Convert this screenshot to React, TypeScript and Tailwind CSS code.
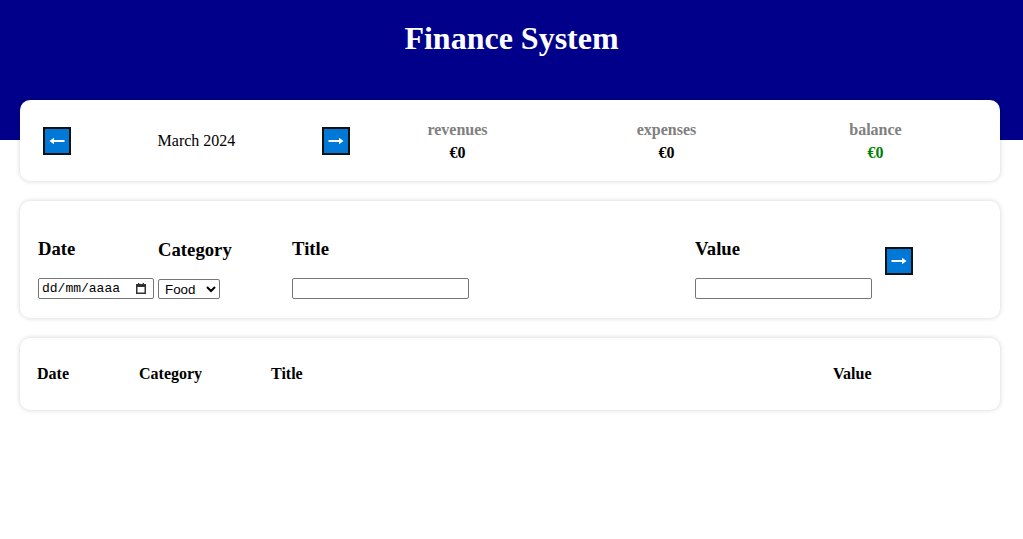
import React from "react";

const Arrow = ({ dir }: { dir: "left" | "right" }) => (
  <svg width="16" height="10" viewBox="0 0 16 10" className={dir === "left" ? "rotate-180" : ""}>
    <line x1="0.5" y1="5" x2="12" y2="5" stroke="white" strokeWidth="2" />
    <path d="M11 1.8 L15.5 5 L11 8.2 Z" fill="white" />
  </svg>
);

const NavButton = ({ dir }: { dir: "left" | "right" }) => (
  <button className="w-[28px] h-[28px] bg-[#0078d7] border-2 border-[#111] flex items-center justify-center shrink-0">
    <Arrow dir={dir} />
  </button>
);

const Stat = ({ label, value, green }: { label: string; value: string; green?: boolean }) => (
  <div className="flex flex-col items-center font-bold text-[16px] leading-[23px]">
    <span className="text-[#808080]">{label}</span>
    <span className={green ? "text-[#008000]" : "text-black"}>{value}</span>
  </div>
);

const Label = ({ children }: { children: React.ReactNode }) => (
  <h3 className="font-bold text-[18.72px] leading-[22px] mb-[18px]">{children}</h3>
);

export default function App() {
  return (
    <div className="min-h-[539px] bg-white" style={{ fontFamily: '"Liberation Serif", "Times New Roman", serif' }}>
      <header className="h-[140px] bg-[#00008b] text-white text-center pt-[20px]">
        <h1 className="text-[32px] font-bold leading-[37px]">Finance System</h1>
      </header>
      <main className="-mt-[40px] ml-5 w-[980px] flex flex-col gap-5">
        {/* Summary card */}
        <section className="bg-white rounded-[10px] shadow-[0_0_5px_rgba(0,0,0,0.18)] h-[81px] flex items-center pl-[23px] pr-[20px]">
          <div className="w-[307px] flex items-center justify-between">
            <NavButton dir="left" />
            <span className="text-[16px]">March 2024</span>
            <NavButton dir="right" />
          </div>
          <div className="flex-1 ml-[3px] grid grid-cols-3">
            <Stat label="revenues" value="€0" />
            <Stat label="expenses" value="€0" />
            <Stat label="balance" value="€0" green />
          </div>
        </section>

        {/* Input card */}
        <section className="bg-white rounded-[10px] shadow-[0_0_5px_rgba(0,0,0,0.18)] h-[117px] flex items-start pt-[37px] pl-[18px]">
          <div className="w-[120px] flex flex-col">
            <Label>Date</Label>
            <div className="w-[116px] h-[21px] border border-[#767676] rounded-[2px] flex items-center justify-between pl-[3px] pr-[7px]">
              <span className="text-[13px] text-black" style={{ fontFamily: '"Liberation Mono", monospace' }}>dd/mm/aaaa</span>
              <svg width="10" height="11" viewBox="0 0 10 11">
                <rect x="0.75" y="1.75" width="8.5" height="8.5" fill="none" stroke="#333" strokeWidth="1.5" />
                <rect x="0.5" y="1.5" width="9" height="2.5" fill="#333" />
                <rect x="2" y="0" width="1.3" height="2" fill="#333" />
                <rect x="6.7" y="0" width="1.3" height="2" fill="#333" />
              </svg>
            </div>
          </div>
          <div className="w-[134px] flex flex-col">
            <Label>
              <span className="relative top-[1px]">Category</span>
            </Label>
            <select
              className="w-[62px] h-[20px] mt-[1px] border border-[#767676] rounded-[2px] text-[13.33px] pl-[2px] text-black bg-white"
              style={{ fontFamily: '"Liberation Sans", Arial, sans-serif', appearance: "auto" }}
              defaultValue="Food"
            >
              <option>Food</option>
            </select>
          </div>
          <div className="w-[403px] flex flex-col">
            <Label>Title</Label>
            <input type="text" className="w-[177px] h-[21px] border border-[#767676] rounded-[2px]" />
          </div>
          <div className="w-[190px] flex flex-col">
            <Label>Value</Label>
            <input type="text" className="w-[177px] h-[21px] border border-[#767676] rounded-[2px]" />
          </div>
          <div className="mt-[9px]">
            <NavButton dir="right" />
          </div>
        </section>

        {/* Table card */}
        <section className="bg-white rounded-[10px] shadow-[0_0_5px_rgba(0,0,0,0.18)] h-[72px] flex items-center pl-[17px] font-bold text-[16px]">
          <span className="w-[102px]">Date</span>
          <span className="w-[132px]">Category</span>
          <span className="w-[562px]">Title</span>
          <span>Value</span>
        </section>
      </main>
    </div>
  );
}
